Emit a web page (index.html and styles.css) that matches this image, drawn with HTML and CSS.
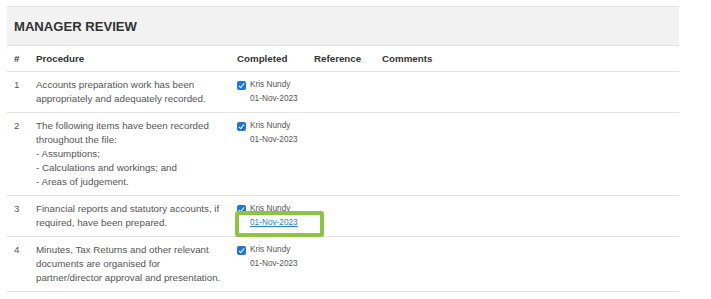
FILE: index.html
```html
<!DOCTYPE html>
<html>
<head>
<meta charset="utf-8">
<link rel="stylesheet" href="styles.css">
</head>
<body>
<section class="panel">
  <header class="panel-head">MANAGER REVIEW</header>
  <div class="row head">
    <div class="cell">#</div>
    <div class="cell">Procedure</div>
    <div class="cell">Completed</div>
    <div class="cell">Reference</div>
    <div class="cell">Comments</div>
  </div>
  <div class="row">
    <div class="cell">1</div>
    <div class="cell proc">Accounts preparation work has been appropriately and adequately recorded.</div>
    <div class="cell done"><div class="who"><span class="cb"></span>Kris Nundy</div><div class="date">01-Nov-2023</div></div>
    <div class="cell"></div>
    <div class="cell"></div>
  </div>
  <div class="row">
    <div class="cell">2</div>
    <div class="cell proc">The following items have been recorded throughout the file:<br>- Assumptions;<br>- Calculations and workings; and<br>- Areas of judgement.</div>
    <div class="cell done"><div class="who"><span class="cb"></span>Kris Nundy</div><div class="date">01-Nov-2023</div></div>
    <div class="cell"></div>
    <div class="cell"></div>
  </div>
  <div class="row">
    <div class="cell">3</div>
    <div class="cell proc">Financial reports and statutory accounts, if required, have been prepared.</div>
    <div class="cell done"><div class="who"><span class="cb"></span>Kris Nundy</div><div class="date linked"><a href="#">01-Nov-2023</a><span class="hl"></span></div></div>
    <div class="cell"></div>
    <div class="cell"></div>
  </div>
  <div class="row">
    <div class="cell">4</div>
    <div class="cell proc">Minutes, Tax Returns and other relevant documents are organised for partner/director approval and presentation.</div>
    <div class="cell done"><div class="who"><span class="cb"></span>Kris Nundy</div><div class="date">01-Nov-2023</div></div>
    <div class="cell"></div>
    <div class="cell"></div>
  </div>
</section>
</body>
</html>
```
FILE: styles.css
```css
html, body {
  margin: 0;
  padding: 0;
  background: #fff;
}
body {
  padding: 6px 0 0 7px;
  font-family: "Liberation Sans", Arial, sans-serif;
  font-size: 9.75px;
  color: #555;
}
.panel {
  width: 672px;
}
.panel-head {
  height: 38px;
  border-top: 1px solid #e4e4e4;
  border-bottom: 1px solid #e0e0e0;
  background: #f2f2f2;
  display: flex;
  align-items: center;
  padding-left: 7px;
  font-weight: bold;
  font-size: 13.1px;
  color: #333;
}
.row {
  display: grid;
  grid-template-columns: 22px 201px 77px 68px 1fr;
  border-bottom: 1px solid #e3e3e3;
  padding: 6px 0;
  line-height: 14px;
}
.row.head {
  padding: 0;
  height: 25px;
  align-items: center;
  font-weight: bold;
  color: #333;
}
.cell {
  padding-left: 7px;
}
.proc {
  padding-right: 4px;
}
.done {
  font-size: 8.25px;
}
.who {
  display: flex;
  align-items: center;
}
.cb {
  width: 9px;
  height: 9px;
  border-radius: 2px;
  background: #1a73e8;
  margin-right: 4px;
  position: relative;
}
.cb::after {
  content: "";
  position: absolute;
  left: 3px;
  top: 1px;
  width: 2px;
  height: 5px;
  border: solid #fff;
  border-width: 0 1.5px 1.5px 0;
  transform: rotate(40deg);
}
.date {
  padding-left: 13px;
}
.linked {
  position: relative;
}
.linked a {
  color: #2a7fd4;
  text-decoration: underline;
}
.hl {
  position: absolute;
  left: -2px;
  top: -5px;
  width: 81px;
  height: 18px;
  border: 4.5px solid #8cc63f;
  border-radius: 3px;
}
```
